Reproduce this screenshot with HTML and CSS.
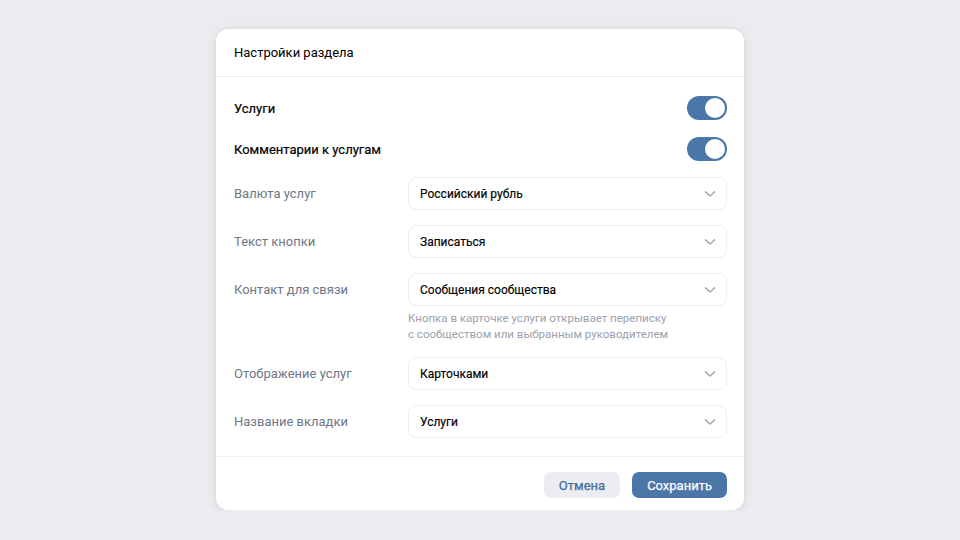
FILE: index.html
```html
<!DOCTYPE html>
<html lang="ru">
<head>
    <meta charset="UTF-8">
    <meta name="viewport" content="width=device-width, initial-scale=1.0">
    <title>Настройки раздела</title>
    <link rel="stylesheet" href="styles.css">
</head>
<body>
    <div class="modal">
        <div class="modal-header">Настройки раздела</div>

        <div class="modal-body">
            <div class="switch-row">
                <span>Услуги</span>
                <span class="toggle"><span class="knob"></span></span>
            </div>
            <div class="switch-row">
                <span>Комментарии к услугам</span>
                <span class="toggle"><span class="knob"></span></span>
            </div>

            <div class="fields">
                <div class="field">
                    <div class="field-label">Валюта услуг</div>
                    <div class="field-control">
                        <div class="select">Российский рубль <svg class="chevron" viewBox="0 0 12 8"><path d="M1.5 1.8 6 6l4.5-4.2"/></svg></div>
                    </div>
                </div>
                <div class="field">
                    <div class="field-label">Текст кнопки</div>
                    <div class="field-control">
                        <div class="select">Записаться <svg class="chevron" viewBox="0 0 12 8"><path d="M1.5 1.8 6 6l4.5-4.2"/></svg></div>
                    </div>
                </div>
                <div class="field">
                    <div class="field-label">Контакт для связи</div>
                    <div class="field-control">
                        <div class="select">Сообщения сообщества <svg class="chevron" viewBox="0 0 12 8"><path d="M1.5 1.8 6 6l4.5-4.2"/></svg></div>
                        <div class="hint">Кнопка в карточке услуги открывает переписку<br>с сообществом или выбранным руководителем</div>
                    </div>
                </div>
                <div class="field">
                    <div class="field-label">Отображение услуг</div>
                    <div class="field-control">
                        <div class="select">Карточками <svg class="chevron" viewBox="0 0 12 8"><path d="M1.5 1.8 6 6l4.5-4.2"/></svg></div>
                    </div>
                </div>
                <div class="field">
                    <div class="field-label">Название вкладки</div>
                    <div class="field-control">
                        <div class="select">Услуги <svg class="chevron" viewBox="0 0 12 8"><path d="M1.5 1.8 6 6l4.5-4.2"/></svg></div>
                    </div>
                </div>
            </div>
        </div>

        <div class="modal-footer">
            <button class="btn btn-secondary">Отмена</button>
            <button class="btn btn-primary">Сохранить</button>
        </div>
    </div>
</body>
</html>
```

FILE: styles.css
```css
body {
    margin: 0;
    padding-top: 29px;
    background: #ebecf0;
    font-family: Roboto, "Noto Sans", Arial, sans-serif;
    color: #000;
    display: flex;
    justify-content: center;
}

.modal {
    width: 528px;
    background: #fff;
    border-radius: 12px;
    box-shadow: 0 2px 12px rgba(0, 0, 0, 0.08), 0 0 2px rgba(0, 0, 0, 0.08);
}

.modal-header {
    height: 47px;
    display: flex;
    align-items: center;
    padding: 0 18px;
    font-size: 13px;
    border-bottom: 1px solid #eef0f2;
}

.modal-body {
    padding: 15px 17px 18px 18px;
    border-bottom: 1px solid #eef0f2;
}

.switch-row {
    height: 32px;
    display: flex;
    align-items: center;
    justify-content: space-between;
    font-size: 13px;
    -webkit-text-stroke: 0.2px #000;
    margin-bottom: 9px;
}

.toggle {
    width: 40px;
    height: 24px;
    border-radius: 12px;
    background: #4a76a8;
    display: flex;
    align-items: center;
    justify-content: flex-end;
    padding: 0 2px;
    box-sizing: border-box;
}

.knob {
    width: 20px;
    height: 20px;
    border-radius: 50%;
    background: #fff;
}

.fields {
    margin-top: 12px;
    display: flex;
    flex-direction: column;
    gap: 15px;
}

.field {
    display: flex;
}

.field-label {
    width: 174px;
    flex-shrink: 0;
    height: 33px;
    display: flex;
    align-items: center;
    font-size: 13px;
    color: #6d7885;
}

.field-control {
    flex: 1;
}

.select {
    height: 33px;
    box-sizing: border-box;
    border: 1px solid #eceef1;
    border-radius: 8px;
    padding: 0 10px 0 11px;
    display: flex;
    align-items: center;
    justify-content: space-between;
    font-size: 12px;
    -webkit-text-stroke: 0.15px #000;
}

.chevron {
    width: 12px;
    height: 8px;
    fill: none;
    stroke: #a3abb4;
    stroke-width: 1.6;
    stroke-linecap: round;
    stroke-linejoin: round;
}

.hint {
    margin-top: 4px;
    font-size: 11.5px;
    line-height: 16px;
    color: #99a2ad;
}

.modal-footer {
    padding: 15px 17px 12px;
    display: flex;
    justify-content: flex-end;
    gap: 12px;
}

.btn {
    height: 26px;
    border: none;
    border-radius: 7px;
    padding: 0 15px;
    font-family: inherit;
    font-size: 13px;
    -webkit-text-stroke: 0.25px currentColor;
}

.btn-secondary {
    background: #ebedf0;
    color: #3f6aa0;
}

.btn-primary {
    background: #4a76a8;
    color: #fff;
}
```
